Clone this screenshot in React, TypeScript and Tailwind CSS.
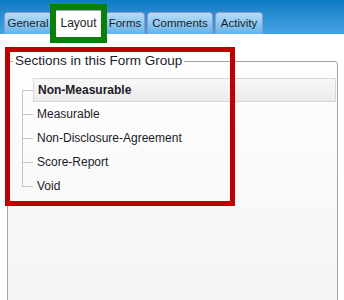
import React from "react";

const tabs = [
  { label: "General", w: "w-[48px]", selected: false },
  { label: "Layout", w: "w-[49px]", selected: true },
  { label: "Forms", w: "w-[40px]", selected: false },
  { label: "Comments", w: "w-[66px]", selected: false },
  { label: "Activity", w: "w-[48px]", selected: false },
];

const sections = ["Non-Measurable", "Measurable", "Non-Disclosure-Agreement", "Score-Report", "Void"];

export default function App() {
  return (
    <div
      className="relative w-[344px] h-[300px] overflow-hidden bg-white text-[12px] text-[#1c1c28]"
      style={{ fontFamily: '"Liberation Sans", Arial, sans-serif' }}
    >
      {/* Tab strip */}
      <div className="h-[34px] bg-gradient-to-b from-[#0a7cc4] to-[#44a2e2] flex items-end pl-[4px] gap-[2px]">
        {tabs.map((t) => (
          <div
            key={t.label}
            className={
              t.selected
                ? `${t.w} h-[26px] -mb-[2px] bg-white border border-b-0 border-[#a3a6c4] rounded-t-[3px] flex items-center justify-center pb-[1px] text-[12px]`
                : `${t.w} h-[22px] bg-gradient-to-b from-[#b6dcf6] to-[#62b3ea] border-[1.5px] border-b-0 border-[#9496c8] rounded-t-[4px] flex items-center justify-center pt-[1px] text-[11.5px] whitespace-nowrap`
            }
          >
            {t.label}
          </div>
        ))}
      </div>

      {/* Group box */}
      <fieldset className="ml-[7px] mt-[19px] w-[331px] h-[260px] border border-[#a5a5a5] rounded-[3px] bg-gradient-to-b from-[#fefefe] to-[#f4f4f4] pt-[9px]">
        <legend className="ml-[5px] px-[2px] leading-[16px] text-[13.5px]">Sections in this Form Group</legend>
        <div className="flex flex-col">
          {sections.map((s, i) => {
            const first = i === 0;
            const last = i === sections.length - 1;
            return (
              <div key={s} className="flex h-[24px]">
                <div className="ml-[14px] w-[11px] flex flex-col">
                  <div className={`h-[13px] border-b border-[#c6c6c6] ${first ? "" : "border-l"}`} />
                  <div className={`flex-1 border-[#c6c6c6] ${last ? "" : "border-l"}`} />
                </div>
                <div
                  className={
                    first
                      ? "flex-1 mr-[1px] border border-[#d8d8d8] bg-gradient-to-b from-[#f8f8f8] to-[#ebebeb] pl-[4px] flex items-center font-bold"
                      : "flex-1 mr-[1px] border border-transparent pl-[3px] flex items-center"
                  }
                >
                  {s}
                </div>
              </div>
            );
          })}
        </div>
      </fieldset>

      {/* Annotation overlays */}
      <div className="absolute left-[50px] top-[4px] w-[57px] h-[39px] border-[6px] border-[#0a7f0a]" />
      <div className="absolute left-[5px] top-[47px] w-[230px] h-[159px] border-[5px] border-[#c00000]" />
    </div>
  );
}
